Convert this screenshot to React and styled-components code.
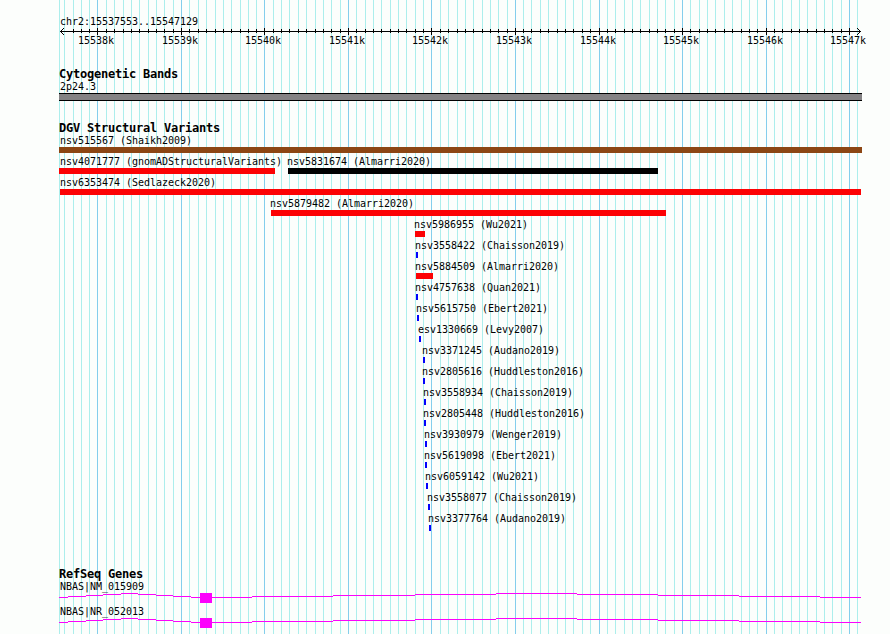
import React from 'react';
import styled, { createGlobalStyle } from 'styled-components';

const GlobalStyle = createGlobalStyle`
  body { margin: 0; background: #fcfefc; }
`;

const MINOR = [
  59, 64, 73, 81, 89, 106, 114, 123, 131, 139, 148, 156, 164, 173, 189, 198, 206, 215, 223,
  231, 240, 248, 256, 273, 281, 289, 298, 306, 315, 323, 331, 340, 356, 365, 373, 381, 390,
  398, 406, 415, 423, 440, 448, 457, 465, 473, 482, 490, 498, 507, 523, 531, 540, 548, 557,
  565, 573, 582, 590, 607, 615, 624, 632, 640, 649, 657, 665, 674, 690, 699, 707, 715, 724,
  732, 741, 749, 757, 774, 782, 791, 799, 807, 816, 824, 832, 841, 857,
];
const MAJOR = [97, 181, 264, 348, 431, 515, 599, 682, 766, 849];

const BLUE = '#0402fc';
const RED = '#fc0204';
const BROWN = '#8c4614';

const VARIANT_ROWS = [
  [{ name: 'nsv515567 (Shaikh2009)', start: 59, end: 862, color: BROWN, nudge: 1 }],
  [
    { name: 'nsv4071777 (gnomADStructuralVariants)', start: 59, end: 275, color: RED, nudge: 1 },
    { name: 'nsv5831674 (Almarri2020)', start: 288, end: 658, color: '#000' },
  ],
  [{ name: 'nsv6353474 (Sedlazeck2020)', start: 60, end: 861, color: RED, nudge: 0 }],
  [{ name: 'nsv5879482 (Almarri2020)', start: 271, end: 666, color: RED }],
  [{ name: 'nsv5986955 (Wu2021)', start: 415, end: 425, color: RED }],
  [{ name: 'nsv3558422 (Chaisson2019)', start: 416, end: 418, color: BLUE }],
  [{ name: 'nsv5884509 (Almarri2020)', start: 416, end: 433, color: RED }],
  [{ name: 'nsv4757638 (Quan2021)', start: 416, end: 418, color: BLUE }],
  [{ name: 'nsv5615750 (Ebert2021)', start: 417, end: 419, color: BLUE }],
  [{ name: 'esv1330669 (Levy2007)', start: 419, end: 421, color: BLUE }],
  [{ name: 'nsv3371245 (Audano2019)', start: 423, end: 425, color: BLUE }],
  [{ name: 'nsv2805616 (Huddleston2016)', start: 423, end: 425, color: BLUE }],
  [{ name: 'nsv3558934 (Chaisson2019)', start: 424, end: 426, color: BLUE }],
  [{ name: 'nsv2805448 (Huddleston2016)', start: 424, end: 426, color: BLUE }],
  [{ name: 'nsv3930979 (Wenger2019)', start: 425, end: 427, color: BLUE }],
  [{ name: 'nsv5619098 (Ebert2021)', start: 425, end: 427, color: BLUE }],
  [{ name: 'nsv6059142 (Wu2021)', start: 426, end: 428, color: BLUE }],
  [{ name: 'nsv3558077 (Chaisson2019)', start: 428, end: 430, color: BLUE }],
  [{ name: 'nsv3377764 (Audano2019)', start: 429, end: 431, color: BLUE }],
];

// Intron line as [x where the level begins, level in px]
const INTRON = [
  [59, 4], [68, 3], [86, 2], [103, 1], [121, 0], [138, 1], [156, 2], [173, 3], [191, 4],
  [252, 3], [333, 2], [415, 1], [496, 0], [577, 1], [658, 2], [739, 3], [820, 4], [861, 4],
];

const Browser = styled.main`
  position: relative;
  width: 890px;
  height: 634px;
  overflow: hidden;
  color: #000;
  font: 10px/12px 'DejaVu Sans Mono', monospace;
  letter-spacing: -0.02px;
  white-space: pre;
`;

const GridLines = styled.svg`
  position: absolute;
  inset: 0;
`;

const Tracks = styled.div`
  position: relative;
  display: flex;
  flex-direction: column;
`;

const Ruler = styled.header`
  box-sizing: border-box;
  display: flex;
  flex-direction: column;
  padding-top: 16px;
  height: 52px;
`;

const Region = styled.div`
  height: 12px;
  padding-left: 60px;
`;

const Axis = styled.svg`
  display: block;
  height: 7px;
`;

const AxisLabels = styled.div`
  display: grid;
  grid-template-columns: 84px 83px 84px 83px 84px 84px 83px 84px 83px 36px;
  padding-left: 78px;
`;

const Track = styled.section`
  box-sizing: border-box;
  display: flex;
  flex-direction: column;
  height: ${(p) => p.$height}px;
  padding-top: 16px;
`;

const TrackTitle = styled.h2`
  margin: 0;
  height: 13px;
  padding-left: 59px;
  font-size: 12px;
  line-height: 12px;
  font-weight: bold;
  letter-spacing: -0.224px;
`;

const Label = styled.div`
  height: 12px;
  margin-left: ${(p) => p.$indent}px;
`;

const Chromosome = styled.div`
  box-sizing: border-box;
  width: 803px;
  height: 8px;
  margin-left: 59px;
  border: solid #000;
  border-width: 1px 0;
  background: #848284;
`;

const VariantRow = styled.div`
  display: flex;
  height: 21px;
`;

const Variant = styled.div`
  width: ${(p) => p.$width}px;
  margin-left: ${(p) => p.$gap}px;
  flex: none;
`;

const Bar = styled.div`
  height: 6px;
  background: ${(p) => p.$color};
`;

const Gene = styled.div`
  height: 25px;
`;

const GeneShape = styled.svg`
  display: block;
  height: 10px;
`;

function Variants({ items }) {
  return (
    <VariantRow>
      {items.map((v, i) => (
        <Variant key={v.name} $width={v.end - v.start} $gap={v.start - (i ? items[i - 1].end : 0)}>
          <Label $indent={v.nudge ?? -1}>{v.name}</Label>
          <Bar $color={v.color} />
        </Variant>
      ))}
    </VariantRow>
  );
}

function GeneTrack({ name }) {
  return (
    <Gene>
      <Label $indent={60}>{name}</Label>
      <GeneShape width="890" height="10" fill="#fc02fc" shapeRendering="crispEdges">
        {INTRON.slice(0, -1).map(([x, y], i) => (
          <rect key={x} x={x} y={y} width={INTRON[i + 1][0] - x} height="1" />
        ))}
        <rect x="200" y="0" width="12" height="10" />
      </GeneShape>
    </Gene>
  );
}

export default function App() {
  return (
    <>
      <GlobalStyle />
      <Browser>
        <GridLines width="890" height="634" shapeRendering="crispEdges">
          {MINOR.map((x) => <rect key={x} x={x} width="1" height="634" fill="#aceeec" />)}
          {MAJOR.map((x) => <rect key={x} x={x} width="1" height="634" fill="#84ceec" />)}
        </GridLines>
        <Tracks>
          <Ruler>
            <Region>chr2:15537553..15547129</Region>
            <Axis width="890" height="7" shapeRendering="crispEdges">
              <rect x="60" y="3" width="801" height="1" />
              {MINOR.slice(2, -1).map((x) => <rect key={x} x={x} y="1" width="1" height="4" />)}
              {MAJOR.map((x) => <rect key={x} x={x} y="0" width="1" height="7" />)}
              {[0, 1, 2, 3, 4, 5, 6].map((y) => (
                <React.Fragment key={y}>
                  <rect x={60 + Math.abs(y - 3)} y={y} width="1" height="1" />
                  <rect x={860 - Math.abs(y - 3)} y={y} width="1" height="1" />
                </React.Fragment>
              ))}
            </Axis>
            <AxisLabels>
              {MAJOR.map((x, i) => <span key={x}>{`${15538 + i}k`}</span>)}
            </AxisLabels>
          </Ruler>
          <Track $height={54}>
            <TrackTitle>Cytogenetic Bands</TrackTitle>
            <Label $indent={60}>2p24.3</Label>
            <Chromosome />
          </Track>
          <Track $height={446}>
            <TrackTitle>DGV Structural Variants</TrackTitle>
            {VARIANT_ROWS.map((items) => <Variants key={items[0].name} items={items} />)}
          </Track>
          <Track $height={82}>
            <TrackTitle>RefSeq Genes</TrackTitle>
            <GeneTrack name="NBAS|NM_015909" />
            <GeneTrack name="NBAS|NR_052013" />
          </Track>
        </Tracks>
      </Browser>
    </>
  );
}
